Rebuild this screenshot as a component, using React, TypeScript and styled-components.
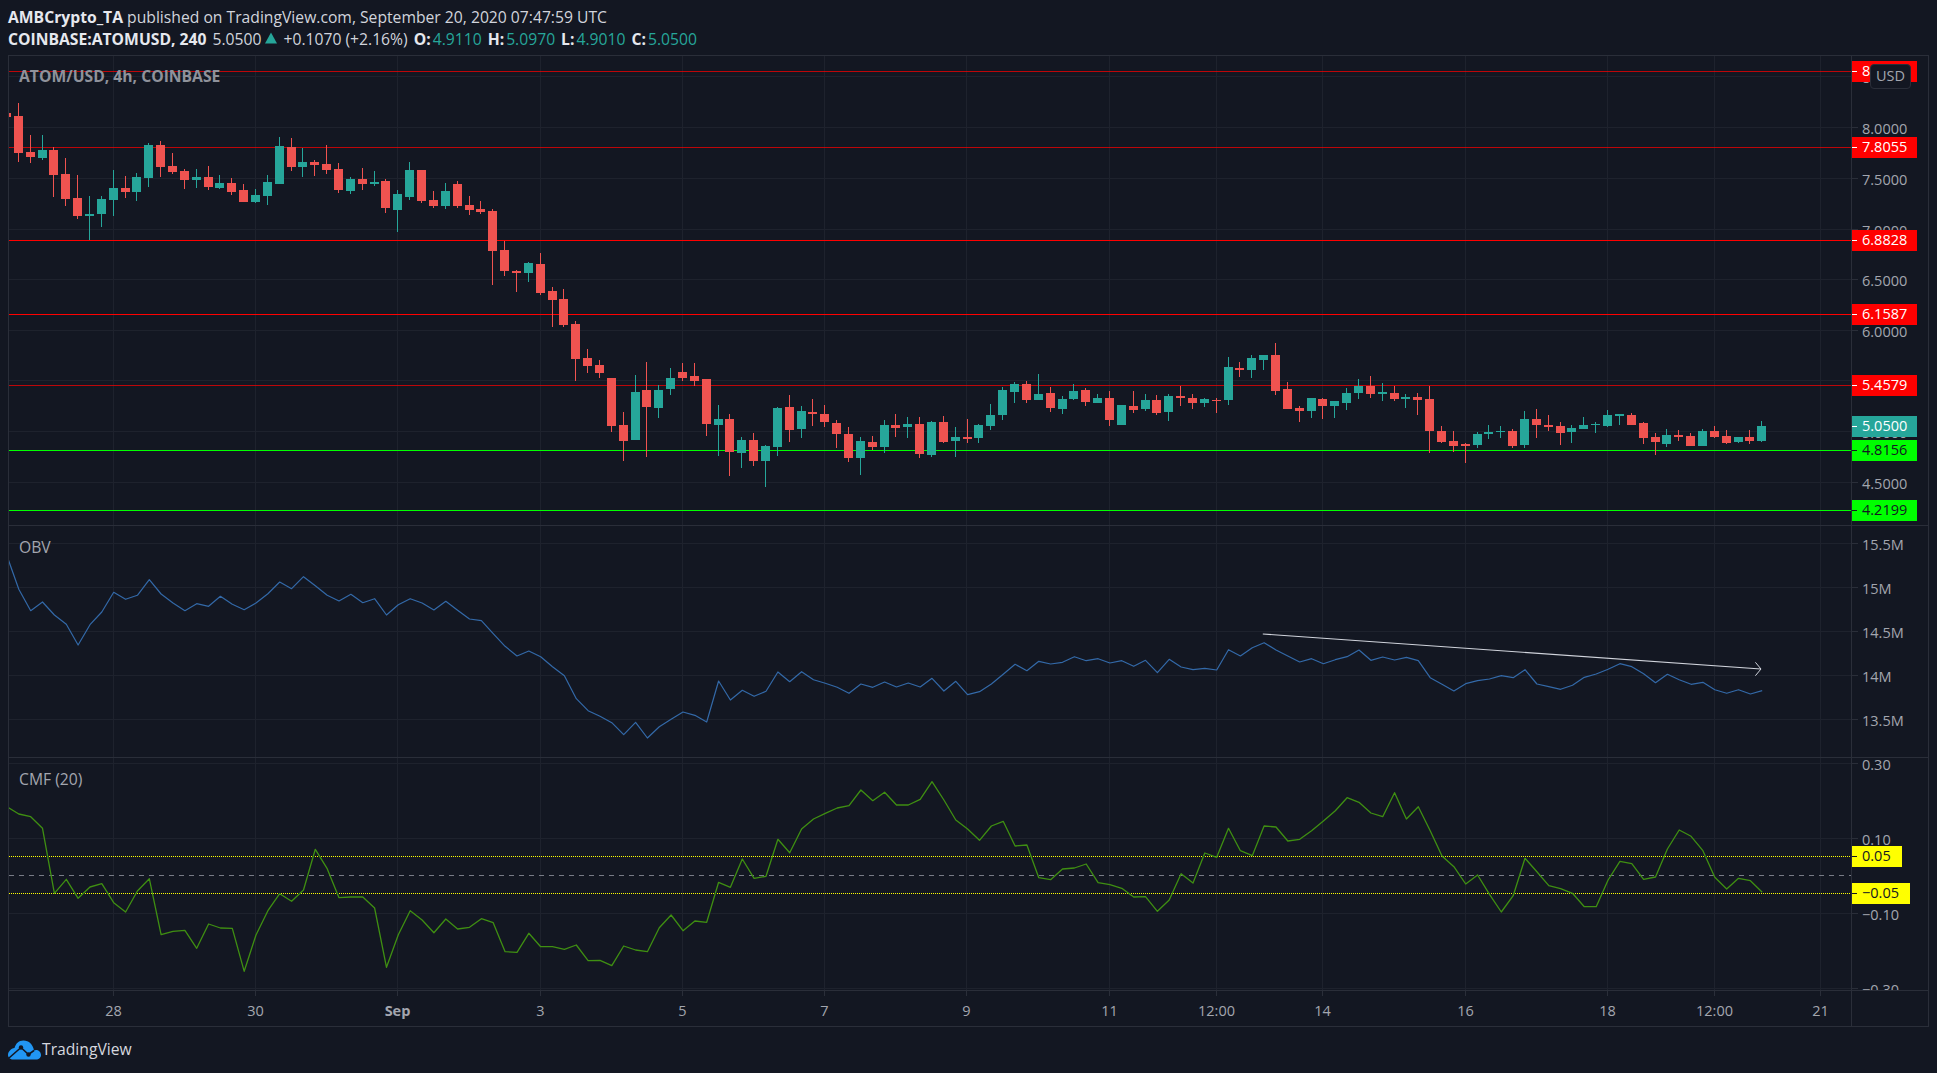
import React from "react";
import styled, { createGlobalStyle } from "styled-components";

const UI_FONT = `"Open Sans", "Noto Sans", "Liberation Sans", sans-serif`;
const BG = "#131722";
const FRAME = "#2a2e39";
const GRID = "#1e222d";
const UP = "#26a69a";
const DOWN = "#ef5350";
const AXIS_TEXT = "#a3a6af";

type Candle = [number, number, number, number, "r" | "t"];

// rows are wick top, body top, body bottom, wick bottom measured on the reference at 3x
const toCandles = (base: number, rows: Candle[]) =>
  rows.map(([a, b, c, d, k]) => ({
    wt: Math.round(base + a / 3),
    bt: Math.round(base + b / 3),
    bb: Math.round(base + c / 3),
    wb: Math.round(base + d / 3),
    k,
  }));

const candles = [
  ...toCandles(100, [
    [10, 48, 158, 185, "r"], [105, 156, 170, 188, "r"], [105, 150, 173, 179, "t"], [141, 150, 224, 290, "r"],
    [174, 222, 296, 317, "r"], [225, 294, 347, 356, "r"], [288, 342, 347, 420, "t"], [288, 297, 341, 380, "t"],
    [210, 264, 299, 347, "t"], [228, 264, 275, 293, "r"], [219, 231, 275, 302, "t"], [129, 135, 233, 260, "t"],
    [123, 135, 200, 230, "r"], [159, 198, 215, 221, "r"], [207, 213, 239, 266, "r"], [207, 231, 239, 263, "t"],
    [198, 231, 260, 269, "r"], [225, 249, 263, 266, "t"], [234, 249, 275, 284, "r"], [252, 270, 305, 305, "r"],
    [267, 285, 305, 308, "t"], [225, 246, 287, 314, "t"], [111, 138, 251, 251, "t"], [114, 141, 200, 212, "r"],
    [144, 186, 200, 230, "t"], [180, 186, 194, 227, "r"], [135, 192, 209, 221, "r"], [189, 207, 269, 278, "r"],
    [231, 237, 272, 281, "t"], [204, 237, 251, 269, "r"], [213, 246, 251, 257, "t"], [237, 243, 323, 338, "r"],
    [270, 282, 329, 395, "t"], [186, 210, 290, 299, "t"], [210, 210, 302, 308, "r"], [273, 300, 317, 323, "r"],
    [249, 273, 317, 326, "t"], [243, 252, 317, 323, "r"], [288, 315, 329, 344, "r"], [303, 327, 335, 341, "r"],
    [327, 333, 452, 554, "r"],
  ]),
  ...toCandles(180, [
    [183, 210, 272, 287, "r"], [270, 273, 278, 335, "r"], [246, 249, 278, 305, "t"], [219, 252, 338, 344, "r"],
    [321, 333, 359, 440, "r"], [327, 357, 434, 440, "r"], [423, 432, 536, 602, "r"], [507, 534, 557, 578, "r"],
    [540, 555, 578, 593, "r"], [594, 594, 737, 755, "r"], [696, 735, 782, 842, "r"], [585, 636, 779, 779, "t"],
    [546, 630, 680, 830, "r"], [615, 630, 683, 713, "t"], [564, 594, 626, 644, "t"], [549, 576, 593, 602, "r"],
    [549, 588, 602, 617, "r"], [597, 597, 731, 767, "r"], [675, 717, 734, 827, "t"], [702, 717, 815, 887, "r"],
    [771, 780, 818, 863, "t"], [759, 780, 842, 857, "r"], [795, 798, 842, 920, "t"], [681, 684, 800, 827, "t"],
    [645, 681, 749, 785, "r"], [678, 693, 746, 773, "t"], [657, 696, 701, 737, "r"], [675, 702, 725, 740, "r"],
    [720, 729, 761, 803, "r"], [741, 762, 833, 845, "r"], [771, 783, 833, 884, "t"], [768, 786, 800, 809, "r"],
    [720, 735, 800, 818, "t"], [702, 735, 743, 770, "r"], [711, 732, 740, 773, "t"], [711, 732, 821, 833, "r"],
    [723, 726, 824, 830, "t"], [708, 726, 785, 788, "r"],
  ]),
  ...toCandles(320, [
    [321, 351, 362, 411, "t"], [297, 351, 357, 369, "r"], [312, 315, 353, 369, "t"], [252, 285, 317, 330, "t"],
    [201, 210, 284, 299, "t"], [186, 192, 215, 249, "t"], [183, 192, 239, 249, "r"], [162, 222, 239, 239, "t"],
    [201, 219, 263, 275, "r"], [228, 237, 266, 281, "t"], [192, 213, 237, 239, "t"], [204, 210, 245, 257, "r"],
    [222, 234, 248, 248, "t"], [213, 234, 299, 317, "r"], [255, 255, 314, 314, "t"], [213, 258, 269, 278, "r"],
    [222, 240, 266, 272, "t"], [225, 240, 278, 284, "r"], [222, 228, 275, 302, "t"], [198, 228, 233, 257, "r"],
    [222, 234, 248, 266, "r"], [234, 237, 248, 260, "t"], [234, 240, 243, 278, "r"], [111, 141, 239, 254, "t"],
    [126, 144, 149, 170, "r"], [105, 114, 149, 173, "t"], [105, 105, 119, 149, "t"], [69, 105, 212, 224, "r"],
    [186, 207, 266, 266, "r"], [258, 264, 272, 305, "r"], [234, 234, 272, 293, "t"], [234, 237, 257, 296, "r"],
    [243, 243, 257, 293, "t"],
  ]),
  ...toCandles(340, [
    [144, 159, 188, 209, "t"], [117, 138, 158, 176, "t"], [108, 138, 161, 173, "r"], [129, 156, 161, 182, "t"],
    [138, 159, 176, 182, "r"], [162, 171, 176, 203, "t"], [159, 171, 179, 224, "r"], [138, 177, 272, 338, "r"],
    [258, 273, 305, 308, "r"], [273, 303, 317, 335, "r"], [309, 312, 317, 368, "r"], [276, 282, 314, 323, "t"],
    [255, 276, 281, 296, "t"], [258, 273, 275, 293, "t"], [267, 273, 317, 323, "r"], [213, 237, 314, 323, "t"],
    [207, 237, 254, 293, "r"], [225, 255, 260, 272, "r"], [246, 258, 278, 314, "r"], [255, 264, 275, 308, "t"],
    [231, 255, 266, 267, "t"], [246, 252, 255, 278, "t"], [210, 225, 257, 260, "t"], [222, 222, 227, 254, "t"],
    [219, 225, 254, 254, "r"], [246, 249, 293, 311, "r"], [279, 291, 305, 344, "r"], [267, 285, 311, 320, "t"],
    [270, 285, 290, 302, "r"], [279, 288, 317, 317, "r"], [267, 273, 317, 317, "t"], [258, 273, 290, 293, "r"],
    [270, 288, 308, 311, "r"], [291, 291, 305, 308, "t"], [270, 291, 302, 311, "r"], [243, 258, 302, 305, "t"],
  ]),
];

const barX = (i: number) => 18.33 + 11.86 * i;

const obv = [
  ...[78, 178, 242, 216, 255, 283, 345, 284, 246, 187, 208, 196, 149, 192, 219, 242, 221, 229, 199, 223, 239, 219, 191, 156, 176, 140, 167, 196, 213, 193, 218, 206, 255, 224, 206, 219, 240, 214, 241, 267, 272, 311, 349, 378, 363, 380, 410, 437, 506, 542, 559, 578, 614, 577, 624, 590, 568, 546, 556, 576, 453, 510, 481, 499, 484, 426, 455, 425, 449, 460, 472, 490, 462, 472, 456, 471].map((v) => 530 + v / 3),
  ...[219, 231, 205, 243, 214, 254, 245, 222, 193, 163, 182, 154, 162, 157, 140, 152, 146, 159, 152, 169, 151, 188, 148, 171, 179, 175, 180, 119, 138, 113, 98, 120, 138, 156, 146, 161, 149, 140, 120, 151, 141, 150, 142, 152, 203, 223, 243, 221, 212, 207, 197, 203, 179, 222, 230, 238, 226, 202, 192, 178, 161, 170, 191, 218, 193, 209, 223, 217, 239, 250, 239, 252, 242].map((v) => 610 + v / 3),
];

const cmf = [
  ...[140, 162, 170, 205, 400, 358, 415, 381, 371, 428, 456, 393, 356, 524, 514, 511, 565, 492, 504, 505, 634, 525, 452, 401, 424, 390, 268, 326, 413, 411, 411, 444, 622, 524, 452, 480, 518, 477, 507, 502, 476, 488, 575, 577, 520, 560, 560, 568, 555, 602, 601, 617, 558, 570, 575, 503, 465, 512, 483, 487, 367, 382, 297, 355, 349, 238, 278, 207, 177, 160, 144, 137, 90, 122, 97, 135],
  ...[135, 118, 65, 120, 180, 207, 241, 198, 184, 258, 255, 353, 359, 327, 324, 312, 368, 374, 385, 411, 410, 454, 420, 341, 369, 279, 292, 205, 272, 287, 198, 201, 243, 238, 212, 183, 152, 113, 127, 159, 170, 98, 177, 140, 212, 288, 320, 372, 345, 403, 456, 407, 295, 335, 377, 386, 400, 440, 440, 360, 304, 311, 358, 351, 267, 210, 229, 272, 352, 387, 355, 362, 397],
].map((v) => 760 + v / 3);

const toPoints = (ys: number[]) => ys.map((y, k) => `${(barX(k - 1) + 0.5).toFixed(1)},${y.toFixed(1)}`).join(" ");

const VERTICALS = [113, 255, 397, 540, 682, 824, 966, 1109, 1216, 1322, 1465, 1607, 1714, 1820];
const TIME_LABELS: [string, number, boolean][] = [
  ["28", 113, false], ["30", 255, false], ["Sep", 397, true], ["3", 540, false], ["5", 682, false], ["7", 824, false],
  ["9", 966, false], ["11", 1109, false], ["12:00", 1216, false], ["14", 1322, false], ["16", 1465, false],
  ["18", 1607, false], ["12:00", 1714, false], ["21", 1820, false],
];

const PRICE_SCALE: [string, number][] = [
  ["8.5000", 76], ["8.0000", 127], ["7.5000", 178], ["7.0000", 229], ["6.5000", 279], ["6.0000", 330], ["5.5000", 380], ["5.0000", 431], ["4.5000", 482],
];
const OBV_SCALE: [string, number][] = [["15.5M", 543], ["15M", 587], ["14.5M", 631], ["14M", 675], ["13.5M", 719]];
const CMF_SCALE: [string, number][] = [["0.30", 763], ["0.10", 838], ["−0.10", 913], ["−0.30", 988]];

type Level = { text: string; y: number; bg: string; fg: string; strength: number; width: number };
const PRICE_LEVELS: Level[] = [
  { text: "8.5500", y: 71, bg: "#ff0000", fg: "#ffffff", strength: 0.72, width: 66 },
  { text: "7.8055", y: 147, bg: "#ff0000", fg: "#ffffff", strength: 0.72, width: 66 },
  { text: "6.8828", y: 240, bg: "#ff0000", fg: "#ffffff", strength: 1, width: 66 },
  { text: "6.1587", y: 314, bg: "#ff0000", fg: "#ffffff", strength: 1, width: 66 },
  { text: "5.4579", y: 385, bg: "#ff0000", fg: "#ffffff", strength: 0.72, width: 66 },
  { text: "5.0500", y: 426, bg: UP, fg: "#ffffff", strength: 0, width: 66 },
  { text: "4.8156", y: 450, bg: "#00ff00", fg: BG, strength: 1, width: 66 },
  { text: "4.2199", y: 510, bg: "#00ff00", fg: BG, strength: 1, width: 66 },
];
const CMF_LEVELS: Level[] = [
  { text: "0.05", y: 856, bg: "#ffff00", fg: BG, strength: 1, width: 51 },
  { text: "−0.05", y: 893, bg: "#ffff00", fg: BG, strength: 1, width: 59 },
];

const GlobalStyle = createGlobalStyle`
  html, body { margin: 0; padding: 0; background: ${BG}; }
  body { font-family: ${UI_FONT}; }
`;

const Page = styled.div`
  box-sizing: border-box;
  width: 1937px;
  height: 1073px;
  padding: 0 8px;
  background: ${BG};
  overflow: hidden;
  display: flex;
  flex-direction: column;
`;

const Header = styled.header`
  height: 55px;
  display: flex;
  flex-direction: column;
  padding-top: 5.5px;
  box-sizing: border-box;
  color: #d1d4dc;
  font-size: 15.7px;
`;

const HeaderRow = styled.div`
  height: 22px;
  line-height: 22px;
  display: flex;
  align-items: center;
  white-space: pre;
`;

const Strong = styled.span`
  font-weight: 700;
  color: #e6e8ee;
`;

const QuoteLabel = styled(Strong)`
  margin-right: 2px;
`;

const Quote = styled.span`
  color: ${UP};
`;

const Gap = styled.span<{ $w: number }>`
  display: inline-block;
  width: ${(p) => p.$w}px;
`;

const Triangle = styled.svg`
  width: 12px;
  height: 12px;
  margin: 0 6px 2px 4px;
  flex: none;
`;

const Frame = styled.div`
  box-sizing: border-box;
  width: 1921px;
  height: 972px;
  border: 1px solid ${FRAME};
  display: grid;
  grid-template-columns: 1842px 1fr;
  grid-template-rows: 470px 232px 233px 1fr;
`;

const Plot = styled.div`
  position: relative;
  overflow: hidden;
  border-bottom: 1px solid ${FRAME};
`;

const PlotSvg = styled.svg`
  display: block;
  width: 100%;
  height: 100%;
`;

const Legend = styled.div<{ $top: number; $bold?: boolean }>`
  position: absolute;
  left: 10px;
  top: ${(p) => p.$top}px;
  font-size: 15.7px;
  line-height: 20px;
  font-weight: ${(p) => (p.$bold ? 700 : 400)};
  color: ${(p) => (p.$bold ? "#8f929b" : "#a3a6af")};
`;

const Axis = styled.div`
  position: relative;
  overflow: hidden;
  border-left: 1px solid ${FRAME};
  border-bottom: 1px solid ${FRAME};
`;

const ScaleLabel = styled.span`
  position: absolute;
  left: 10px;
  font-size: 14.5px;
  line-height: 20px;
  color: ${AXIS_TEXT};
  white-space: nowrap;
  transform: translateY(-8px);
`;

const ScaleTick = styled.i`
  position: absolute;
  left: 0;
  width: 6px;
  height: 1px;
  background: ${FRAME};
`;

const LevelTag = styled.span<{ $bg: string; $fg: string; $w: number }>`
  position: absolute;
  left: -1px;
  box-sizing: border-box;
  width: ${(p) => p.$w}px;
  height: 21px;
  padding-left: 11px;
  font-size: 14.5px;
  line-height: 20px;
  white-space: nowrap;
  background: ${(p) => p.$bg};
  color: ${(p) => p.$fg};

  &::before {
    content: "";
    position: absolute;
    left: 1px;
    top: 10px;
    width: 5px;
    height: 1px;
    background: currentColor;
  }
`;

const UnitButton = styled.div`
  position: absolute;
  left: 18px;
  top: 8px;
  box-sizing: border-box;
  width: 41px;
  height: 25px;
  border: 1px solid ${FRAME};
  border-radius: 4px;
  background: ${BG};
  color: ${AXIS_TEXT};
  font-size: 14.5px;
  line-height: 22px;
  text-align: center;
`;

const TimeScale = styled.div`
  position: relative;
  overflow: hidden;
`;

const TimeLabel = styled.span<{ $bold: boolean }>`
  position: absolute;
  top: 10px;
  transform: translateX(-50%);
  font-size: 14.5px;
  line-height: 20px;
  font-weight: ${(p) => (p.$bold ? 700 : 400)};
  color: ${AXIS_TEXT};
`;

const TimeTick = styled.i`
  position: absolute;
  top: 0;
  width: 1px;
  height: 5px;
  background: ${FRAME};
`;

const Corner = styled.div`
  border-left: 1px solid ${FRAME};
`;

const Footer = styled.footer`
  display: flex;
  align-items: center;
  gap: 1px;
  margin-top: 13px;
  height: 19px;
`;

const Logo = styled.svg`
  width: 33px;
  height: 20px;
  flex: none;
`;

const Brand = styled.span`
  font-size: 15.7px;
  color: #d6d8df;
  line-height: 19px;
`;

const GridLines = ({ top, bottom, ys }: { top: number; bottom: number; ys: number[] }) => (
  <g shapeRendering="crispEdges">
    {VERTICALS.map((x) => (
      <rect key={x} x={x} y={top} width={1} height={bottom - top} fill={GRID} />
    ))}
    {ys.map((y) => (
      <rect key={y} x={9} y={y} width={1842} height={1} fill={GRID} />
    ))}
  </g>
);

const AxisScale = ({ items, top }: { items: [string, number][]; top: number }) => (
  <>
    {items.map(([text, y]) => (
      <React.Fragment key={text}>
        <ScaleTick style={{ top: y - top }} />
        <ScaleLabel style={{ top: y - top }}>{text}</ScaleLabel>
      </React.Fragment>
    ))}
  </>
);

const AxisLevels = ({ items, top }: { items: Level[]; top: number }) => (
  <>
    {items.map((l) => (
      <LevelTag key={l.text} $bg={l.bg} $fg={l.fg} $w={l.width} style={{ top: l.y - 10 - top }}>
        {l.text}
      </LevelTag>
    ))}
  </>
);

const PricePane = () => (
  <Plot>
    <PlotSvg viewBox="9 56 1842 469" preserveAspectRatio="none">
      <GridLines top={56} bottom={525} ys={PRICE_SCALE.map((s) => s[1])} />
      <g shapeRendering="crispEdges">
        {PRICE_LEVELS.filter((l) => l.strength > 0).map((l) => (
          <rect key={l.text} x={9} y={l.y} width={1842} height={1} fill={l.bg} opacity={l.strength} />
        ))}
        <rect x={9} y={113} width={2} height={4} fill={DOWN} />
        {candles.map((c, i) => {
          const x = Math.floor(barX(i));
          const color = c.k === "r" ? DOWN : UP;
          return (
            <g key={i} fill={color}>
              <rect x={x} y={c.wt} width={1} height={c.wb - c.wt} />
              <rect x={x - 4} y={c.bt} width={9} height={Math.max(1, c.bb - c.bt)} />
            </g>
          );
        })}
      </g>
    </PlotSvg>
    <Legend $top={10} $bold>
      ATOM/USD, 4h, COINBASE
    </Legend>
  </Plot>
);

const ObvPane = () => (
  <Plot>
    <PlotSvg viewBox="9 526 1842 231" preserveAspectRatio="none">
      <GridLines top={526} bottom={757} ys={OBV_SCALE.map((s) => s[1])} />
      <polyline points={toPoints(obv)} fill="none" stroke="#3369a8" strokeWidth={1.2} strokeLinejoin="round" />
      <path d="M1262.8 634 L1761 669" stroke="#d1d4dc" strokeWidth={1.2} fill="none" />
      <path d="M1755.4 662.3 L1761 669 L1755.4 675.7" stroke="#d1d4dc" strokeWidth={1} fill="none" />
    </PlotSvg>
    <Legend $top={11}>OBV</Legend>
  </Plot>
);

const CmfPane = () => (
  <Plot>
    <PlotSvg viewBox="9 758 1842 232" preserveAspectRatio="none">
      <GridLines top={758} bottom={990} ys={CMF_SCALE.map((s) => s[1])} />
      <g strokeWidth={1} fill="none" shapeRendering="crispEdges">
        <path d="M9 856.5 H1851" stroke="#ffff00" strokeDasharray="1 1" />
        <path d="M9 893.5 H1851" stroke="#ffff00" strokeDasharray="1 1" />
        <path d="M9 875.5 H1851" stroke="#787b86" strokeDasharray="5 5" />
      </g>
      <polyline points={toPoints(cmf)} fill="none" stroke="#3f8f12" strokeWidth={1.3} strokeLinejoin="round" />
    </PlotSvg>
    <Legend $top={11}>CMF (20)</Legend>
  </Plot>
);

export default function App() {
  return (
    <Page>
      <GlobalStyle />
      <Header>
        <HeaderRow>
          <Strong>AMBCrypto_TA</Strong> published on TradingView.com, September 20, 2020 07:47:59 UTC
        </HeaderRow>
        <HeaderRow>
          <Strong>COINBASE:ATOMUSD, 240</Strong>
          <Gap $w={6} />
          5.0500
          <Triangle viewBox="0 0 12 12">
            <path d="M6 0.5 L12 11.5 H0 Z" fill={UP} />
          </Triangle>
          +0.1070 (+2.16%)
          <Gap $w={6} />
          <QuoteLabel>O:</QuoteLabel>
          <Quote>4.9110</Quote>
          <Gap $w={6} />
          <QuoteLabel>H:</QuoteLabel>
          <Quote>5.0970</Quote>
          <Gap $w={6} />
          <QuoteLabel>L:</QuoteLabel>
          <Quote>4.9010</Quote>
          <Gap $w={6} />
          <QuoteLabel>C:</QuoteLabel>
          <Quote>5.0500</Quote>
        </HeaderRow>
      </Header>
      <Frame>
        <PricePane />
        <Axis>
          <AxisScale items={PRICE_SCALE} top={56} />
          <AxisLevels items={PRICE_LEVELS} top={56} />
          <UnitButton>USD</UnitButton>
        </Axis>
        <ObvPane />
        <Axis>
          <AxisScale items={OBV_SCALE} top={526} />
        </Axis>
        <CmfPane />
        <Axis>
          <AxisScale items={CMF_SCALE} top={758} />
          <AxisLevels items={CMF_LEVELS} top={758} />
        </Axis>
        <TimeScale>
          {TIME_LABELS.map(([text, x, bold]) => (
            <React.Fragment key={`${text}${x}`}>
              <TimeTick style={{ left: x - 9 }} />
              <TimeLabel $bold={bold} style={{ left: x - 8.5 }}>
                {text}
              </TimeLabel>
            </React.Fragment>
          ))}
        </TimeScale>
        <Corner />
      </Frame>
      <Footer>
        <Logo viewBox="0 0 33 20">
          <path
            d="M5 19.5 H28 C31 19.5 33 17.5 33 15 C33 12 30.5 10 28 10 C27.5 10 26.5 10.2 26 10.5 C25 4.5 21 0.5 15.5 0.5 C10.5 0.5 7.5 4 6.5 8 C3 8.5 0 11.5 0 15 C0 17.5 2.5 19.5 5 19.5 Z"
            fill="#2196f3"
          />
          <path d="M1 18 L13 7.5 L20.5 14.5 L26 10.5" stroke={BG} strokeWidth={1.6} fill="none" />
          <circle cx={13} cy={7.5} r={2.2} fill={BG} />
          <circle cx={20.5} cy={14.5} r={2.2} fill={BG} />
        </Logo>
        <Brand>TradingView</Brand>
      </Footer>
    </Page>
  );
}
